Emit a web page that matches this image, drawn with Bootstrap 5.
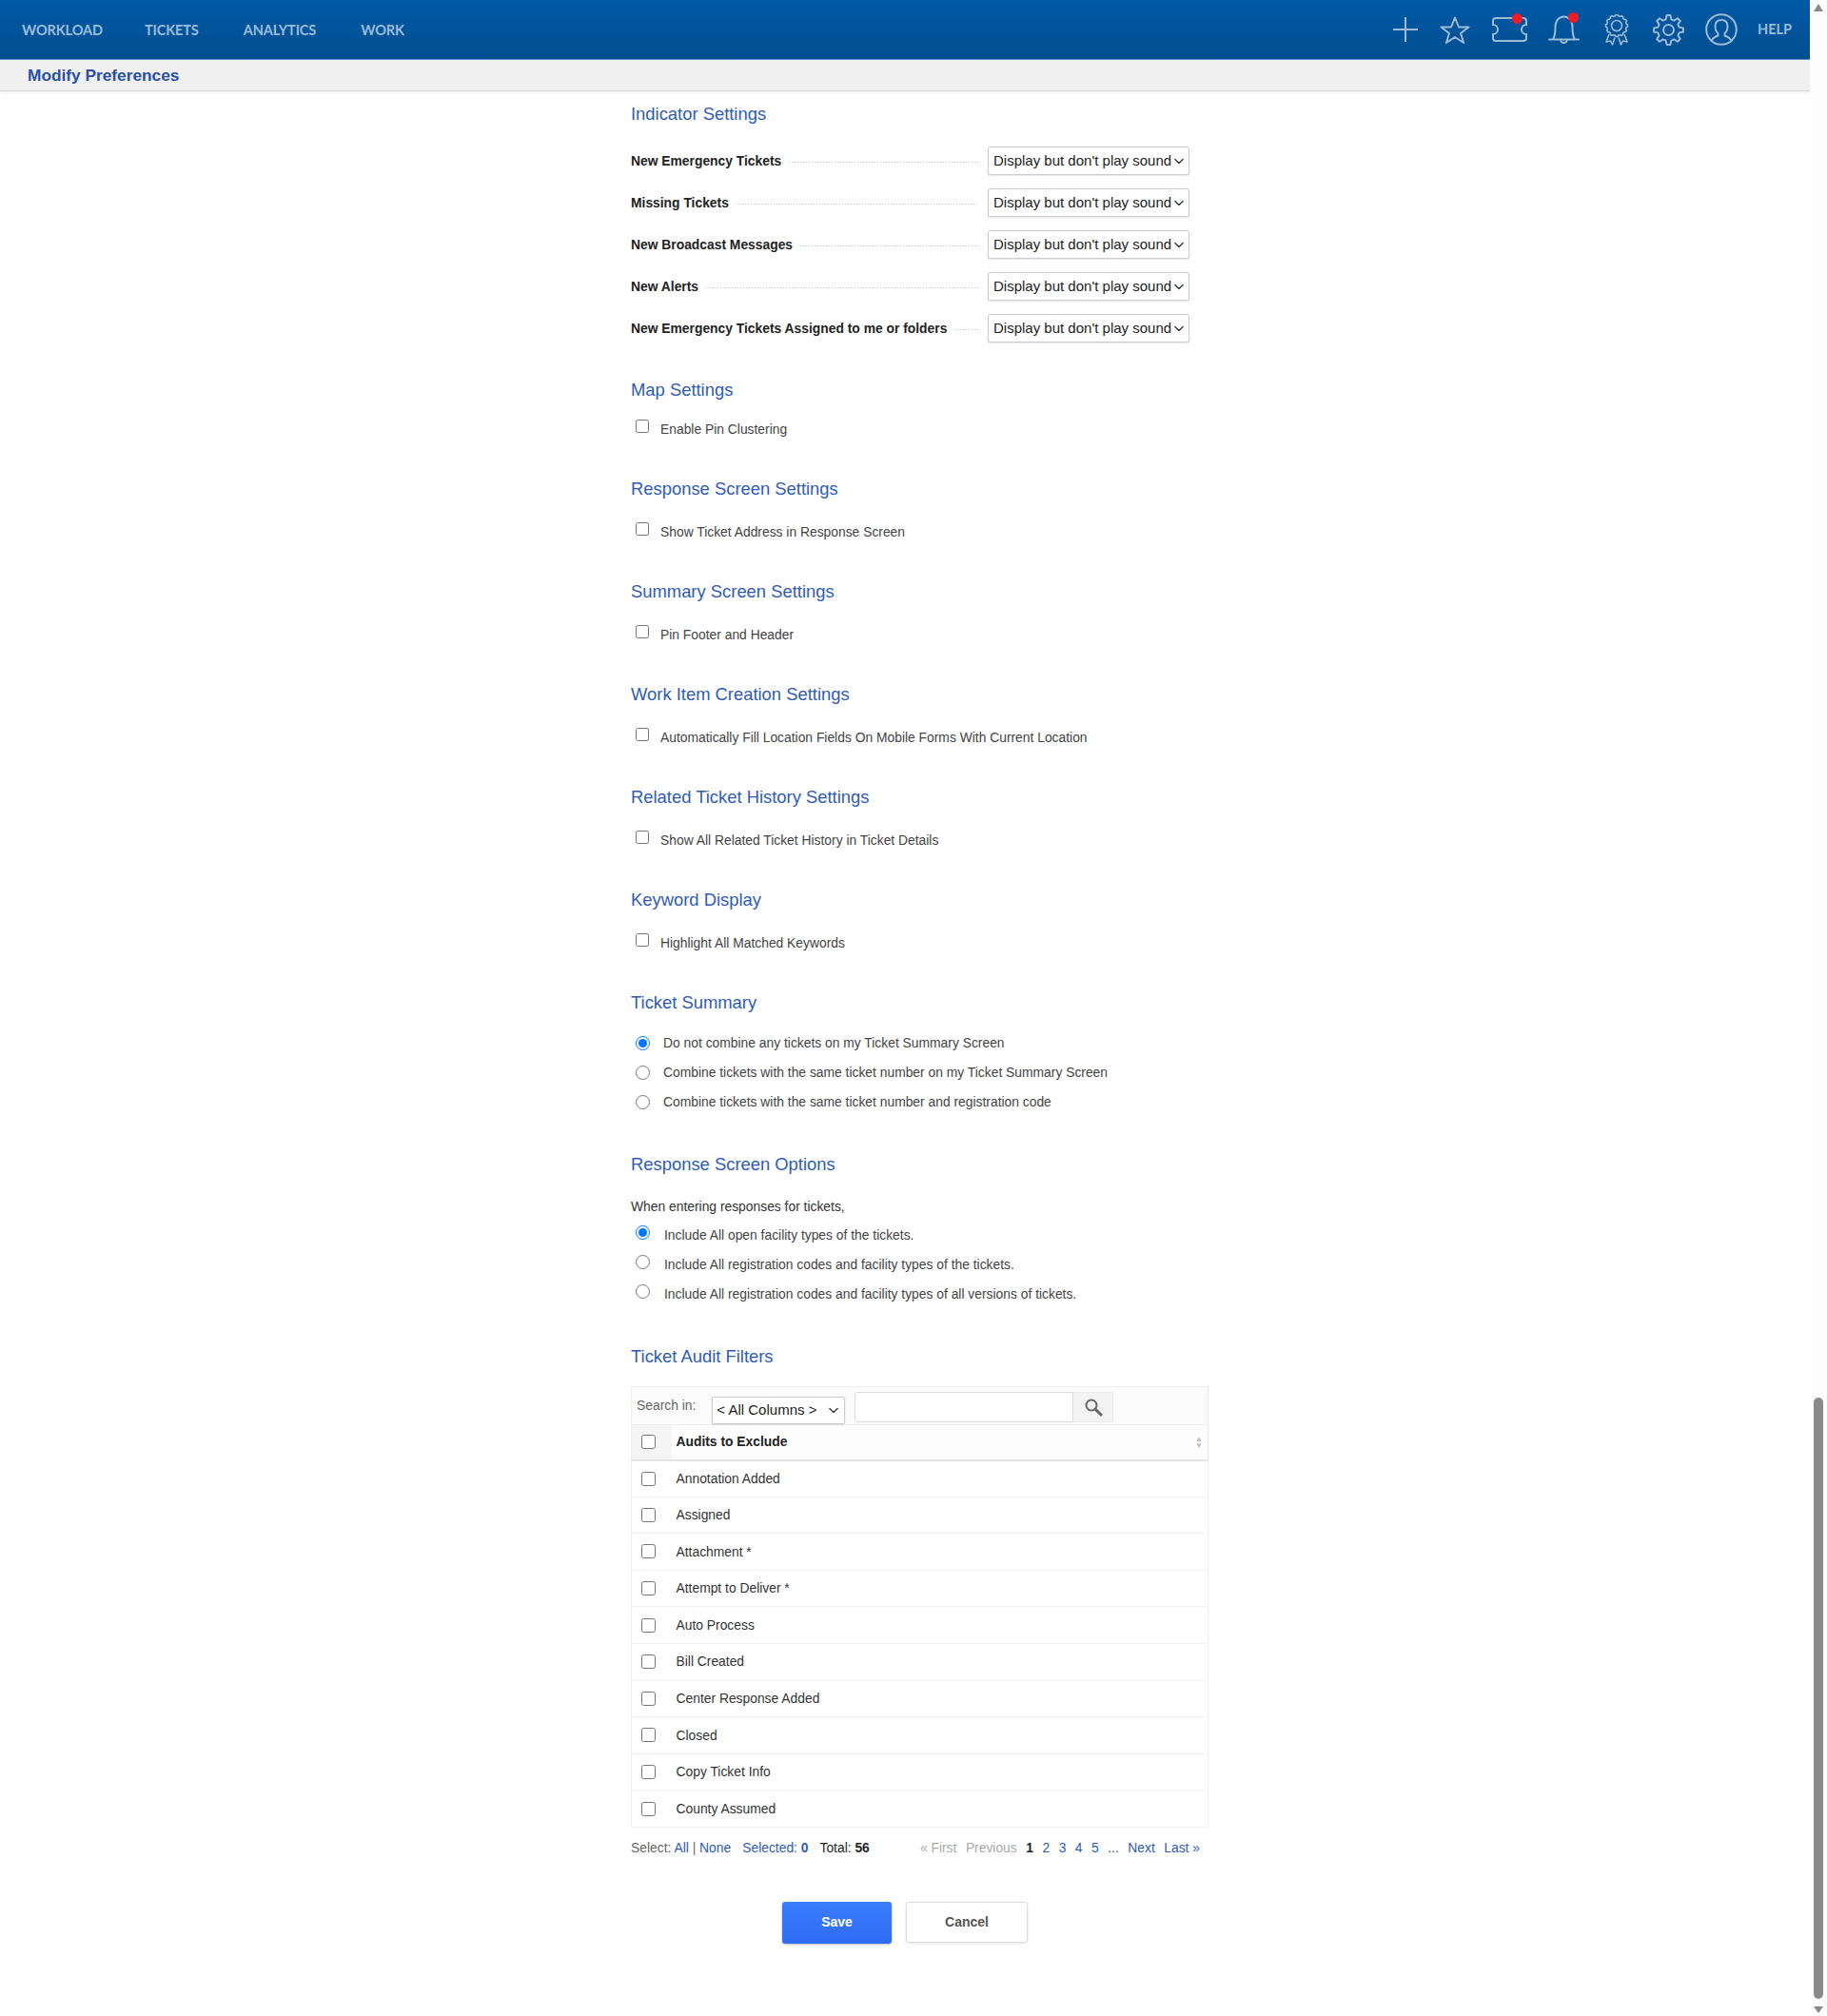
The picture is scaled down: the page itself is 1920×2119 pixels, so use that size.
<!DOCTYPE html>
<html lang="en">
<head>
    <meta charset="UTF-8">
    <meta name="viewport" content="width=device-width, initial-scale=1.0">
    <title>Modify Preferences</title>
    <link href="https://cdn.jsdelivr.net/npm/bootstrap@5.3.0/dist/css/bootstrap.min.css" rel="stylesheet">
    <style>
        body { font-family: "Liberation Sans", Arial, sans-serif; font-size: 13.85px; color: #444; background: #fff; }
        a { color: #2f5cb8; text-decoration: none; }

        .top-bar { height: 63px; background: linear-gradient(#005aa6, #004e90); border-bottom: 1px solid #5a93c9; padding: 1px 0 0 23px; }
        .top-link { font-family: Lato, sans-serif; font-weight: 700; font-size: 14.5px; color: #9dbcdc; letter-spacing: -.1px; margin-right: 47px; }
        .top-link:first-child { margin-right: 44px; }
        .top-icons svg { display: block; fill: none; stroke: #9dbad8; stroke-width: 2; }
        .top-icons svg.thin-icon { stroke-width: 1.6; }
        .top-icons { margin-top: -1px; }
        .icon-wrap { position: relative; }
        .red-dot { position: absolute; width: 11px; height: 11px; border-radius: 50%; background: #ee1c25; top: -4px; }
        .help-link { font-family: Lato, sans-serif; font-weight: 700; font-size: 14.5px; color: #9dbcdc; }

        .sub-bar { height: 33px; background: #f0f0f0; border-bottom: 1px solid #d6d6d6; box-shadow: 0 2px 4px rgba(0,0,0,.05); padding-left: 29px; }
        .sub-bar h1 { font-size: 17.3px; font-weight: 700; color: #2a4ea6; margin: 0; line-height: 33px; }

        .pref-col { width: 607px; margin-left: 663px; padding-top: 12px; }
        .sect-title { font-size: 18.4px; font-weight: 400; line-height: 24px; color: #2f5cb8; margin: 39px 0 21px; }
        .sect-title.first { margin-top: 0; margin-bottom: 22px; }
        .sect-title.tight { margin-bottom: 15px; }
        .sect-title.map { margin-top: 38px; margin-bottom: 17px; }
        .sect-title.opts { margin-top: 38px; margin-bottom: 22px; }
        .sect-title.audit { margin-top: 38px; margin-bottom: 19px; }

        .ind-row { width: 587px; height: 30px; margin-bottom: 14px; }
        .ind-row label { font-weight: 700; color: #222; margin: 0; }
        .dot-fill { height: 1px; background: repeating-linear-gradient(90deg, #c4c4c4 0 1px, transparent 1px 3px); margin: 2px 10px 0 8px; }
        .pref-select.form-select { width: 212px; height: 30px; font-size: 15px; color: #222; padding: 0 16px 0 5px; border: 1px solid #ccc; border-radius: 2px; background-position: right 3px center; background-size: 14px 11px; box-shadow: 0 1px 2px rgba(0,0,0,.1); }

        .check-row { height: 24px; }
        .check-row input { width: 14px; height: 14px; margin: 0 12px 6px 5px; }
        .radio-row { height: 31px; }
        .radio-row input { width: 15px; height: 15px; margin: 0 14px 0 5px; }
        .radio-row.up input { margin-bottom: 7px; margin-right: 15px; }
        .when-line { height: 20px; line-height: 20px; color: #333; margin-bottom: 5px; }

        .audit-tools { width: 607px; height: 40px; background: #fbfbfb; border: 1px solid #eee; border-bottom: 0; padding-left: 5px; }
        .tools-label { color: #666; margin-right: 17px; }
        .tools-select.form-select { width: 140px; height: 29px; font-size: 15px; color: #222; padding: 0 16px 0 4px; border: 1px solid #ccc; border-radius: 2px; background-position: right 4px center; background-size: 14px 11px; margin: 10px 10px 0 0; box-shadow: 0 1px 2px rgba(0,0,0,.1); }
        .tools-input.form-control { width: 230px; height: 32px; border: 1px solid #ddd; border-radius: 3px 0 0 3px; margin-top: 5px; }
        .tools-btn { width: 42px; height: 32px; background: #f3f3f3; border: 1px solid #eaeaea; border-left: 0; border-radius: 0 3px 3px 0; margin-top: 5px; }

        .audit-table.table { width: 607px; margin: 0; border: 1px solid #eee; font-size: 13.85px; color: #333; }
        .audit-table th, .audit-table td { padding: 0; vertical-align: middle; height: 38.6px; border-bottom: 1px solid #f2f2f2; box-shadow: none; }
        .audit-table th { font-weight: 700; color: #222; height: 37px; border-top: 1px solid #eee; border-bottom: 2px solid #e4e4e4; background: #fdfdfd; }
        .audit-table input { width: 15px; height: 15px; display: block; margin: 0 0 0 10px; }
        .audit-table .sel-cell { width: 42px; }
        .audit-table th.sel-cell { background: #f5f5f5; }
        .audit-table .name-cell { padding-left: 5px; }
        .sort-marks { color: #bbb; font-size: 8px; line-height: 7px; padding-right: 5px; }

        .audit-foot { width: 607px; height: 20px; margin-top: 11px; line-height: 20px; color: #666; padding-right: 9px; }
        .audit-foot b { font-weight: 700; }
        .pager-links { gap: 9.5px; }
        .pager-off { color: #aaa; }
        .pager-now { color: #222; font-weight: 700; }

        .form-actions { margin: 47px 0 0 159px; gap: 15px; }
        .save-btn.btn { width: 115px; height: 44px; background: linear-gradient(#3b7cff, #2e6bf2); border: 0; border-radius: 3px; font-size: 14px; font-weight: 700; color: #fff; box-shadow: 0 1px 3px rgba(0,0,0,.25); }
        .cancel-btn.btn { width: 128px; height: 43px; background: #fff; border: 1px solid #ddd; border-radius: 3px; font-size: 14px; font-weight: 700; color: #555; box-shadow: 0 1px 3px rgba(0,0,0,.1); }

        .fake-scroll { width: 18px; background: #fdfdfd; padding: 4px 0 3px; }
        .scroll-up { width: 0; height: 0; margin-left: 4px; border: 5.5px solid transparent; border-top: 0; border-bottom: 8px solid #888; }
        .scroll-down { width: 0; height: 0; margin: 8px 0 0 4px; border: 5.5px solid transparent; border-bottom: 0; border-top: 7px solid #888; }
        .scroll-thumb { width: 10px; height: 632px; margin: auto 0 0 4px; background: #8a8a8a; border-radius: 5px; }
    </style>
</head>
<body>
<div class="d-flex min-vh-100">
    <div class="flex-grow-1">
        <nav class="top-bar d-flex align-items-center">
            <a class="top-link" href="#">WORKLOAD</a>
            <a class="top-link" href="#">TICKETS</a>
            <a class="top-link" href="#">ANALYTICS</a>
            <a class="top-link" href="#">WORK</a>
            <div class="top-icons d-flex align-items-center ms-auto">
                <svg width="26" height="26" viewBox="0 0 26 26" style="margin-right:23px"><path d="M13 0V26M0 13H26"/></svg>
                <svg width="32" height="29" viewBox="0 0 32 29" style="margin-right:23px"><path stroke-linejoin="round" d="M16 1.5L20 11.5H30.5L22 18L25.2 28L16 22L6.8 28L10 18L1.5 11.5H12Z"/></svg>
                <div class="icon-wrap" style="margin-right:22px">
                    <svg width="37" height="26" viewBox="0 0 37 26"><path d="M4 1H33a3 3 0 0 1 3 3V8a5 5 0 0 0 0 10V22a3 3 0 0 1 -3 3H4a3 3 0 0 1 -3 -3V18a5 5 0 0 0 0 -10V4a3 3 0 0 1 3 -3Z"/></svg>
                    <span class="red-dot" style="left:21px;top:-4px"></span>
                </div>
                <div class="icon-wrap" style="margin-right:26px">
                    <svg width="33" height="30" viewBox="0 0 33 30"><path stroke-linecap="round" d="M1 25.5H32M5 25.5C7 22 7.500 18 7.500 13C7.500 6 11 1.500 16.500 1.500C22 1.500 25.500 6 25.500 13C25.500 18 26 22 28 25.500M13 25.500a3.500 3.500 0 0 0 7 0"/></svg>
                    <span class="red-dot" style="left:21px;top:-3px"></span>
                </div>
                <svg class="thin-icon" width="26" height="33" viewBox="0 0 26 33" style="margin-right:25px"><path id="ribbonEdge" d=""/><circle cx="13" cy="12" r="5.500"/><path stroke-linejoin="round" d="M5 21L2 29L6.500 28L8.500 32L11 24.500M21 21L24 29L19.500 28L17.500 32L15 24.500"/></svg>
                <svg width="33" height="33" viewBox="0 0 33 33" style="margin-right:22px"><path id="gearEdge" stroke-linejoin="round" d=""/><circle cx="16.500" cy="16.500" r="5.500"/></svg>
                <svg width="34" height="34" viewBox="0 0 34 34" style="margin-right:21px"><circle cx="17" cy="17" r="15.800"/><path stroke-linecap="round" d="M6.500 29C8 25.500 10.500 24.500 13.500 23.500V21C11 19 10.500 16.500 10.500 13.500C10.500 9.500 13 7 17 7C21 7 23.500 9.500 23.500 13.500C23.500 16.500 23 19 20.500 21V23.500C23.500 24.500 26 25.500 27.500 29"/></svg>
                <a class="help-link" href="#" style="margin-right:19px">HELP</a>
            </div>
        </nav>
        <div class="sub-bar"><h1>Modify Preferences</h1></div>

        <main class="pref-col">
            <h2 class="sect-title first">Indicator Settings</h2>
            <div class="ind-row d-flex align-items-center">
                <label>New Emergency Tickets</label><span class="dot-fill flex-grow-1"></span>
                <select class="form-select pref-select"><option>Display but don't play sound</option></select>
            </div>
            <div class="ind-row d-flex align-items-center">
                <label>Missing Tickets</label><span class="dot-fill flex-grow-1"></span>
                <select class="form-select pref-select"><option>Display but don't play sound</option></select>
            </div>
            <div class="ind-row d-flex align-items-center">
                <label>New Broadcast Messages</label><span class="dot-fill flex-grow-1"></span>
                <select class="form-select pref-select"><option>Display but don't play sound</option></select>
            </div>
            <div class="ind-row d-flex align-items-center">
                <label>New Alerts</label><span class="dot-fill flex-grow-1"></span>
                <select class="form-select pref-select"><option>Display but don't play sound</option></select>
            </div>
            <div class="ind-row d-flex align-items-center">
                <label>New Emergency Tickets Assigned to me or folders</label><span class="dot-fill flex-grow-1"></span>
                <select class="form-select pref-select"><option>Display but don't play sound</option></select>
            </div>

            <h2 class="sect-title map">Map Settings</h2>
            <div class="check-row d-flex align-items-center"><input type="checkbox"><span>Enable Pin Clustering</span></div>

            <h2 class="sect-title">Response Screen Settings</h2>
            <div class="check-row d-flex align-items-center"><input type="checkbox"><span>Show Ticket Address in Response Screen</span></div>

            <h2 class="sect-title">Summary Screen Settings</h2>
            <div class="check-row d-flex align-items-center"><input type="checkbox"><span>Pin Footer and Header</span></div>

            <h2 class="sect-title">Work Item Creation Settings</h2>
            <div class="check-row d-flex align-items-center"><input type="checkbox"><span>Automatically Fill Location Fields On Mobile Forms With Current Location</span></div>

            <h2 class="sect-title">Related Ticket History Settings</h2>
            <div class="check-row d-flex align-items-center"><input type="checkbox"><span>Show All Related Ticket History in Ticket Details</span></div>

            <h2 class="sect-title">Keyword Display</h2>
            <div class="check-row d-flex align-items-center"><input type="checkbox"><span>Highlight All Matched Keywords</span></div>

            <h2 class="sect-title tight">Ticket Summary</h2>
            <div class="radio-row d-flex align-items-center"><input type="radio" name="combine" checked><span>Do not combine any tickets on my Ticket Summary Screen</span></div>
            <div class="radio-row d-flex align-items-center"><input type="radio" name="combine"><span>Combine tickets with the same ticket number on my Ticket Summary Screen</span></div>
            <div class="radio-row d-flex align-items-center"><input type="radio" name="combine"><span>Combine tickets with the same ticket number and registration code</span></div>

            <h2 class="sect-title opts">Response Screen Options</h2>
            <div class="when-line">When entering responses for tickets,</div>
            <div class="radio-row up d-flex align-items-center"><input type="radio" name="include" checked><span>Include All open facility types of the tickets.</span></div>
            <div class="radio-row up d-flex align-items-center"><input type="radio" name="include"><span>Include All registration codes and facility types of the tickets.</span></div>
            <div class="radio-row up d-flex align-items-center"><input type="radio" name="include"><span>Include All registration codes and facility types of all versions of tickets.</span></div>

            <h2 class="sect-title audit">Ticket Audit Filters</h2>
            <div class="audit-tools d-flex align-items-start">
                <span class="tools-label align-self-center">Search in:</span>
                <select class="form-select tools-select"><option>&lt; All Columns &gt;</option></select>
                <input class="form-control tools-input" type="text">
                <span class="tools-btn d-flex align-items-center justify-content-center">
                    <svg width="20" height="20" viewBox="0 0 20 20" fill="none" stroke="#666"><circle cx="8" cy="8" r="5.500" stroke-width="2"/><path d="M12 12L18 18" stroke-width="3" stroke-linecap="round"/></svg>
                </span>
            </div>
            <table class="table audit-table">
                <thead>
                    <tr>
                        <th class="sel-cell"><input type="checkbox"></th>
                        <th class="name-cell">
                            <div class="d-flex align-items-center justify-content-between">Audits to Exclude<span class="sort-marks">&#9650;<br>&#9660;</span></div>
                        </th>
                    </tr>
                </thead>
                <tbody>
                    <tr><td class="sel-cell"><input type="checkbox"></td><td class="name-cell">Annotation Added</td></tr>
                    <tr><td class="sel-cell"><input type="checkbox"></td><td class="name-cell">Assigned</td></tr>
                    <tr><td class="sel-cell"><input type="checkbox"></td><td class="name-cell">Attachment *</td></tr>
                    <tr><td class="sel-cell"><input type="checkbox"></td><td class="name-cell">Attempt to Deliver *</td></tr>
                    <tr><td class="sel-cell"><input type="checkbox"></td><td class="name-cell">Auto Process</td></tr>
                    <tr><td class="sel-cell"><input type="checkbox"></td><td class="name-cell">Bill Created</td></tr>
                    <tr><td class="sel-cell"><input type="checkbox"></td><td class="name-cell">Center Response Added</td></tr>
                    <tr><td class="sel-cell"><input type="checkbox"></td><td class="name-cell">Closed</td></tr>
                    <tr><td class="sel-cell"><input type="checkbox"></td><td class="name-cell">Copy Ticket Info</td></tr>
                    <tr><td class="sel-cell"><input type="checkbox"></td><td class="name-cell">County Assumed</td></tr>
                </tbody>
            </table>
            <div class="audit-foot d-flex justify-content-between">
                <div class="d-flex gap-2">
                    <span>Select: <a href="#">All</a> | <a href="#">None</a></span>
                    <a href="#" class="ms-1">Selected: <b>0</b></a>
                    <span class="text-dark ms-1">Total: <b>56</b></span>
                </div>
                <div class="d-flex pager-links">
                    <span class="pager-off">&laquo; First</span>
                    <span class="pager-off">Previous</span>
                    <span class="pager-now">1</span>
                    <a href="#">2</a><a href="#">3</a><a href="#">4</a><a href="#">5</a>
                    <a href="#">...</a>
                    <a href="#">Next</a>
                    <a href="#">Last &raquo;</a>
                </div>
            </div>
            <div class="form-actions d-flex align-items-center">
                <button class="btn save-btn" type="button">Save</button>
                <button class="btn cancel-btn" type="button">Cancel</button>
            </div>
        </main>
    </div>
    <aside class="fake-scroll d-flex flex-column flex-shrink-0">
        <div class="scroll-up"></div>
        <div class="scroll-thumb"></div>
        <div class="scroll-down"></div>
    </aside>
</div>

<script src="https://cdn.jsdelivr.net/npm/bootstrap@5.3.0/dist/js/bootstrap.bundle.min.js"></script>
<script>
    // outline of a toothed circle for the gear and the award icon
    function toothedPath(cx, cy, outer, inner, teeth) {
        let d = '';
        const step = Math.PI * 2 / teeth;
        for (let i = 0; i < teeth; i++) {
            const a = i * step;
            const pts = [[a - step * .32, inner], [a - step * .16, outer], [a + step * .16, outer], [a + step * .32, inner]];
            pts.forEach(([ang, r], j) => {
                const x = (cx + r * Math.cos(ang)).toFixed(2);
                const y = (cy + r * Math.sin(ang)).toFixed(2);
                d += (i === 0 && j === 0 ? 'M' : 'L') + x + ' ' + y;
            });
        }
        return d + 'Z';
    }
    document.getElementById('gearEdge').setAttribute('d', toothedPath(16.5, 16.5, 15.5, 11.5, 8));
    document.getElementById('ribbonEdge').setAttribute('d', toothedPath(13, 12, 11.5, 10.3, 12));
</script>
</body>
</html>
